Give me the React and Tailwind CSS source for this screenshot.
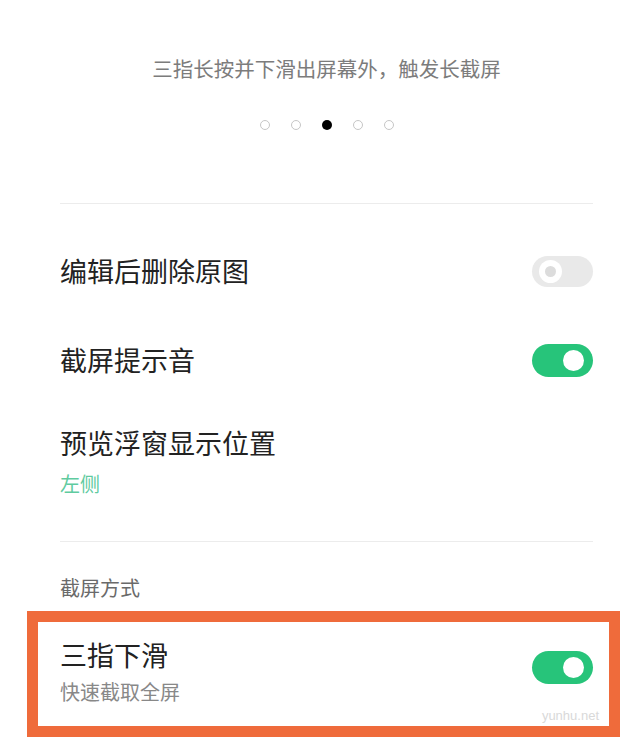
import React from "react";

function ToggleOn() {
  return (
    <div className="relative w-[61px] h-[33px] rounded-full bg-[#27c47a] shrink-0">
      <div className="absolute right-[9px] top-[6px] w-[21px] h-[21px] rounded-full bg-white" />
    </div>
  );
}

function ToggleOff() {
  return (
    <div className="relative w-[61px] h-[31px] rounded-full bg-[#e9e9e9] shrink-0">
      <div className="absolute left-[7px] top-[4px] w-[23px] h-[23px] rounded-full bg-white flex items-center justify-center">
        <div className="w-[11px] h-[11px] rounded-full bg-[#dcdcdc]" />
      </div>
    </div>
  );
}

export default function App() {
  const dots = [0, 1, 2, 3, 4];
  return (
    <div
      className="w-[636px] h-[745px] bg-white overflow-hidden"
      style={{ fontFamily: '"Noto Sans CJK SC", "Noto Sans", sans-serif' }}
    >
      <div className="pl-[17px]">
        <div className="pt-[54px] text-center text-[20.5px] leading-[28px] text-[#7c7c7c]">
          三指长按并下滑出屏幕外，触发长截屏
        </div>
        <div className="mt-[38px] h-[10px] flex items-center justify-center gap-[21px]">
          {dots.map((i) =>
            i === 2 ? (
              <div key={i} className="w-[10px] h-[10px] rounded-full bg-black" />
            ) : (
              <div key={i} className="w-[10px] h-[10px] rounded-full border-[1.5px] border-[#c6c6c6]" />
            )
          )}
        </div>
      </div>
      <div className="mt-[73px] ml-[60px] w-[533px] h-px bg-[#ececec]" />

      <div className="pl-[60px] pr-[43px]">
        <div className="mt-[37px] h-[60px] flex items-center justify-between">
          <div className="text-[27px] leading-[36px] text-[#222222]">编辑后删除原图</div>
          <ToggleOff />
        </div>
        <div className="mt-[29px] h-[60px] flex items-center justify-between">
          <div className="text-[27px] leading-[36px] text-[#222222]">截屏提示音</div>
          <ToggleOn />
        </div>
        <div className="mt-[35px] text-[27px] leading-[36px] text-[#222222]">预览浮窗显示位置</div>
        <div className="mt-[9px] text-[20px] leading-[28px] text-[#5fcb9f]">左侧</div>
      </div>

      <div className="mt-[43px] ml-[60px] w-[533px] h-px bg-[#ececec]" />

      <div className="pl-[60px] mt-[32px] text-[20px] leading-[28px] text-[#6a6a6a]">截屏方式</div>

      <div className="relative mt-[9px] ml-[27px] w-[593px] h-[126px] border-[11px] border-[#ef6b3b] bg-white flex items-start justify-between pl-[22px] pr-[16px]">
        <div className="pt-[15px]">
          <div className="text-[27px] leading-[36px] text-[#222222]">三指下滑</div>
          <div className="mt-[5px] text-[20px] leading-[28px] text-[#888888]">快速截取全屏</div>
        </div>
        <div className="mt-[29px]">
          <ToggleOn />
        </div>
        <div
          className="absolute right-[10px] bottom-[2px] text-[13px] leading-[16px] text-[#d9d9d9]"
          style={{ fontFamily: '"Liberation Sans", sans-serif' }}
        >
          yunhu.net
        </div>
      </div>
    </div>
  );
}
